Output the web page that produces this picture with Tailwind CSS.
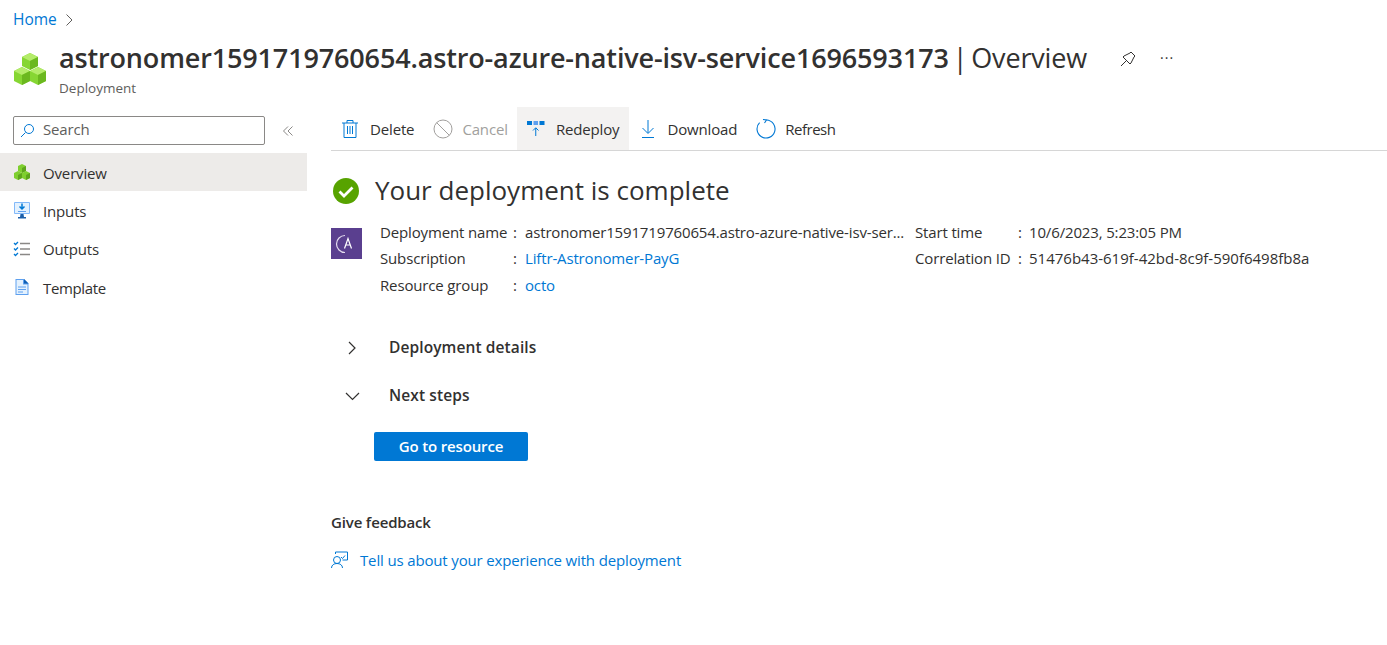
<!DOCTYPE html>
<html lang="en">
<head>
<meta charset="UTF-8">
<title>Deployment Overview</title>
<script src="https://cdn.jsdelivr.net/npm/@tailwindcss/browser@4"></script>
</head>
<body class="bg-white h-[645px] overflow-hidden font-['Open_Sans',sans-serif] text-[#323130] text-[15px] tracking-[-0.15px]">

<!-- breadcrumb -->
<div class="h-[38px] pl-[13px] pt-[1px] flex items-center gap-[7px]">
  <a class="text-[#0078d4] text-[15.500px] tracking-[0px]">Home</a>
  <svg width="11" height="16" viewBox="0 0 11 16" fill="none" stroke="#605e5c"><path d="M2.500 2.500l5.500 5.500-5.500 5.500"/></svg>
</div>

<!-- header -->
<div class="h-[67px] flex items-start pl-[13px]">
  <svg class="mt-[14px]" width="34" height="34" viewBox="0 0 34 34">
    <path d="M17 1l8 4v9l-8 4-8-4V5z" fill="#86d633"/><path d="M9 5l8 4 8-4-8-4z" fill="#b4ec6a"/><path d="M17 9v9l8-4V5z" fill="#6bb81f"/>
    <path d="M9 15l8 4v10l-8 4-8-4V19z" fill="#86d633"/><path d="M1 19l8 4 8-4-8-4z" fill="#b4ec6a"/><path d="M9 23v10l8-4V19z" fill="#6bb81f"/>
    <path d="M25 15l8 4v10l-8 4-8-4V19z" fill="#86d633"/><path d="M17 19l8 4 8-4-8-4z" fill="#b4ec6a"/><path d="M25 23v10l8-4V19z" fill="#6bb81f"/>
  </svg>
  <div class="ml-[12px]">
    <div class="flex items-center h-[41px]">
      <h1 class="text-[27px] whitespace-nowrap tracking-[-0.15px] [word-spacing:-3px]"><span class="font-semibold">astronomer1591719760654.astro-azure-native-isv-service1696593173</span> | Overview</h1>
      <svg class="ml-[32px]" width="18" height="18" viewBox="0 0 18 18" fill="none" stroke="#323130"><path d="M2 16l5-5M5 6l6-3 1-1 4 4-1 1-3 6-1 1-7-7z"/></svg>
      <span class="ml-[23px] mb-[2px] text-[#323130] text-[14px] tracking-[1px]">···</span>
    </div>
    <div class="text-[#605e5c] text-[13.500px] tracking-[0px] mt-[-1px]">Deployment</div>
  </div>
</div>

<div class="flex">
  <!-- sidebar -->
  <aside class="w-[307px] shrink-0">
    <div class="flex items-center pl-[13px] h-[48px] pt-[3px]">
      <div class="w-[252px] h-[29px] border border-[#8a8886] rounded-[2px] flex items-center pl-[6px] gap-[8px] text-[#605e5c]">
        <svg width="15" height="15" viewBox="0 0 15 15" fill="none" stroke="#0078d4"><circle cx="9" cy="6" r="4.5"/><path d="M5.5 9.5L1 14"/></svg>
        <span class="mt-[-2px]">Search</span>
      </div>
      <span class="ml-[17px]">
        <svg width="12" height="12" viewBox="0 0 12 12" fill="none" stroke="#8a8886"><path d="M6 1.5L1.5 6 6 10.5M10.500 1.500L6 6l4.500 4.500"/></svg>
      </span>
    </div>
    <nav class="flex flex-col">
      <a class="h-[38.300px] bg-[#edebe9] flex items-center pl-[13px] gap-[12px]">
        <svg width="18" height="18" viewBox="0 0 18 18">
          <path d="M9 1l4 2v5l-4 2-4-2V3z" fill="#7fcf2f"/><path d="M9 5v5l4-2V3z" fill="#5ea51d"/>
          <path d="M5 8l4 2v5l-4 2-4-2v-5z" fill="#7fcf2f"/><path d="M5 12v5l4-2v-5z" fill="#5ea51d"/>
          <path d="M13 8l4 2v5l-4 2-4-2v-5z" fill="#7fcf2f"/><path d="M13 12v5l4-2v-5z" fill="#5ea51d"/>
        </svg>
        <span class="pt-[2px]">Overview</span>
      </a>
      <a class="h-[38.300px] flex items-center pl-[13px] gap-[12px]">
        <svg width="18" height="18" viewBox="0 0 18 18">
          <rect x="1" y="1" width="16" height="12" fill="#83b9f9" rx="1"/><rect x="2" y="2" width="14" height="10" fill="#e3f1fe"/>
          <path d="M9 2.500v5M6.500 5.500L9 8l2.500-2.500" stroke="#0078d4" stroke-width="1.500" fill="none"/><path d="M5 10.500h8" stroke="#5ea0ef"/>
          <path d="M7.500 13h3l.5 3h-4z" fill="#1b5faa"/><rect x="5" y="16" width="8" height="1.500" fill="#1b5faa"/>
        </svg>
        <span class="pt-[1px]">Inputs</span>
      </a>
      <a class="h-[38.300px] flex items-center pl-[13px] gap-[12px]">
        <svg width="18" height="18" viewBox="0 0 18 18" fill="none">
          <path d="M1 3l1.500 1.500L5 2M1 8.500L2.500 10 5 7.500M1 14l1.500 1.500L5 13" stroke="#0078d4" stroke-width="1.300"/>
          <path d="M7 3.500h10M7 9h10M7 14.500h10" stroke="#8a8886" stroke-width="1.300"/>
        </svg>
        <span class="pt-[1px]">Outputs</span>
      </a>
      <a class="h-[38.300px] flex items-center pl-[13px] gap-[12px]">
        <svg width="18" height="18" viewBox="0 0 18 18">
          <path d="M2.500 1h8.500l4.500 4.500V17h-13z" fill="#5ea0ef"/><path d="M11 1v4.500h4.500z" fill="#0f5fb3"/>
          <path d="M3.500 2h6.500v4.500h4.500V16h-11z" fill="#e3f1fe"/>
          <path d="M5 9h8M5 11.500h8M5 14h5" stroke="#5ea0ef"/>
        </svg>
        <span class="pt-[2px] tracking-[-0.35px]">Template</span>
      </a>
    </nav>
  </aside>

  <!-- main -->
  <main class="flex-1 pl-[24px]">
    <div class="h-[46px] pt-[2px] border-b border-[#d6d6d6] flex">
      <button class="flex items-center pl-[10px] pr-[9px] gap-[11px]">
        <svg width="18" height="20" viewBox="0 0 18 20" fill="none" stroke="#0078d4"><path d="M1 4h16M6 4V1.500h6V4M3 4v14.500h12V4M6.500 7v8M9 7v8M11.500 7v8"/></svg>
        <span class="pt-[1px]">Delete</span>
      </button>
      <button class="flex items-center pl-[10px] pr-[9px] gap-[9px] text-[#a19f9d]">
        <svg width="20" height="20" viewBox="0 0 20 20" fill="none" stroke="#a19f9d"><circle cx="10" cy="10" r="9"/><path d="M3.600 3.600l12.800 12.800"/></svg>
        <span class="pt-[1px]">Cancel</span>
      </button>
      <button class="flex items-center pl-[10px] pr-[10px] gap-[11px] bg-[#f3f2f1]">
        <svg width="18" height="18" viewBox="0 0 18 18">
          <rect x="0" y="1" width="5" height="4" fill="#0078d4"/><rect x="6.500" y="1" width="4.500" height="4" fill="#5ea0ef"/><rect x="12.500" y="1" width="5" height="4" fill="#0078d4"/>
          <path d="M8.750 16V8M6 10.500l2.750-2.750 2.750 2.750" stroke="#0078d4" fill="none"/>
        </svg>
        <span class="pt-[1px]">Redeploy</span>
      </button>
      <button class="flex items-center pl-[11px] pr-[10px] gap-[11px]">
        <svg width="16" height="20" viewBox="0 0 16 20" fill="none" stroke="#0078d4"><path d="M8 1v13M2.500 9L8 14.500 13.500 9M2 18.500h12"/></svg>
        <span class="pt-[1px]">Download</span>
      </button>
      <button class="flex items-center pl-[9px] gap-[9px]">
        <svg width="20" height="20" viewBox="0 0 20 20" fill="none" stroke="#0078d4" stroke-width="1.100"><path d="M10.500 1A9 9 0 1 1 3.600 3.700"/><path d="M7 .5L10.500 1 8.500 4"/></svg>
        <span class="pt-[1px] tracking-[-0.5px]">Refresh</span>
      </button>
    </div>

    <div class="pt-[21px]">
      <div class="flex items-center h-[36px]">
        <svg class="mt-[2px]" width="30" height="30" viewBox="0 0 30 30"><circle cx="15" cy="15" r="13" fill="#57a300"/><path d="M8.500 15.500l4.500 4.500 8.500-8.500" stroke="#fff" stroke-width="2.800" fill="none"/></svg>
        <h2 class="ml-[14px] text-[26px] tracking-[0px]">Your deployment is complete</h2>
      </div>

      <div class="flex mt-[11px]">
        <div class="w-[31px] h-[31px] mt-[9px] bg-[#5a3f8f] flex items-center justify-center">
          <svg width="24" height="24" viewBox="0 0 24 24" fill="none" stroke="#fff" stroke-width="1.200">
            <path d="M10 3.500A8.500 8.500 0 0 0 10 20.500" stroke="#e4dcef"/><path d="M9.500 16.500l3.500-10 3.500 10M11 13h4"/>
          </svg>
        </div>
        <div class="ml-[18px] w-[535px] leading-[26.500px]">
          <div class="flex"><span class="w-[133px] shrink-0">Deployment name</span><span class="w-[12px] shrink-0">:</span><span class="whitespace-nowrap">astronomer1591719760654.astro-azure-native-isv-ser...</span></div>
          <div class="flex mt-[-0.500px]"><span class="w-[133px] shrink-0">Subscription</span><span class="w-[12px] shrink-0">:</span><a class="text-[#0078d4]">Liftr-Astronomer-PayG</a></div>
          <div class="flex mt-[0.500px]"><span class="w-[133px] shrink-0">Resource group</span><span class="w-[12px] shrink-0">:</span><a class="text-[#0078d4]">octo</a></div>
        </div>
        <div class="leading-[26.500px]">
          <div class="flex"><span class="w-[103px] shrink-0">Start time</span><span class="w-[11px] shrink-0">:</span><span>10/6/2023, 5:23:05 PM</span></div>
          <div class="flex mt-[-0.500px]"><span class="w-[103px] shrink-0">Correlation ID</span><span class="w-[11px] shrink-0">:</span><span class="tracking-[0px]">51476b43-619f-42bd-8c9f-590f6498fb8a</span></div>
        </div>
      </div>

      <div class="mt-[25px] flex items-center h-[48px] font-semibold text-[15.500px] tracking-[0.1px]">
        <svg class="ml-[15px]" width="14" height="16" viewBox="0 0 14 16" fill="none" stroke="#323130" stroke-width="1.200"><path d="M3 2l6 6-6 6"/></svg>
        <span class="ml-[29px]">Deployment details</span>
      </div>
      <div class="flex items-center h-[48px] font-semibold text-[15.500px] tracking-[0.1px]">
        <svg class="ml-[14px]" width="16" height="14" viewBox="0 0 16 14" fill="none" stroke="#323130" stroke-width="1.200"><path d="M1 4l6.500 6.500L14 4"/></svg>
        <span class="ml-[28px]">Next steps</span>
      </div>

      <button class="ml-[43px] mt-[12px] w-[154px] h-[29px] bg-[#0078d4] text-white font-semibold rounded-[2px] text-center">Go to resource</button>

      <div class="mt-[50px] font-semibold">Give feedback</div>
      <a class="mt-[16px] flex items-center gap-[12px] text-[#0078d4]">
        <svg width="17" height="18" viewBox="0 0 17 18" fill="none" stroke="#0078d4"><path d="M4.500 3V1h12v8h-5"/><circle cx="6" cy="9" r="3.500"/><path d="M.5 17c0-3 2.500-4.500 5.500-4.500s5.500 1.500 5.500 4.500M10 6l1.500 1.500L14 4.500"/></svg>
        <span>Tell us about your experience with deployment</span>
      </a>
    </div>
  </main>
</div>
</body>
</html>
